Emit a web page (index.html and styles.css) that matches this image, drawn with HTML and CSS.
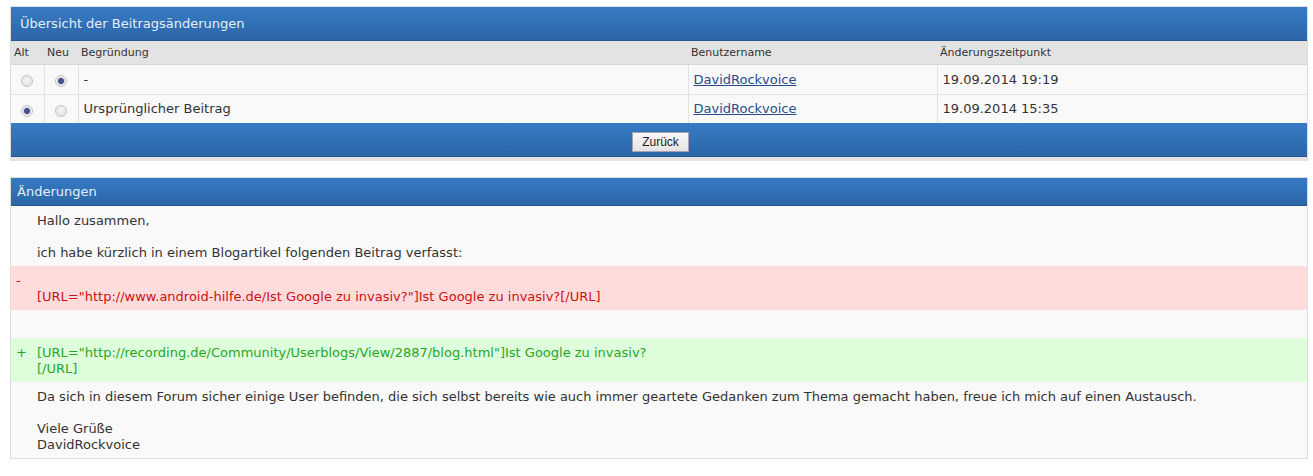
FILE: index.html
```html
<!DOCTYPE html>
<html lang="de">
<head>
    <meta charset="UTF-8">
    <title>Übersicht der Beitragsänderungen</title>
    <link rel="stylesheet" href="styles.css">
</head>
<body>
    <div class="box">
        <h2 class="box-title">Übersicht der Beitragsänderungen</h2>
        <table class="history">
            <thead>
                <tr>
                    <th class="col-alt">Alt</th>
                    <th class="col-neu">Neu</th>
                    <th class="col-reason">Begründung</th>
                    <th class="col-user">Benutzername</th>
                    <th>Änderungszeitpunkt</th>
                </tr>
            </thead>
            <tbody>
                <tr>
                    <td class="radio-cell"><input type="radio" name="old"></td>
                    <td class="radio-cell"><input type="radio" name="new" checked></td>
                    <td>-</td>
                    <td><a href="#">DavidRockvoice</a></td>
                    <td>19.09.2014 19:19</td>
                </tr>
                <tr>
                    <td class="radio-cell"><input type="radio" name="old" checked></td>
                    <td class="radio-cell"><input type="radio" name="new"></td>
                    <td>Ursprünglicher Beitrag</td>
                    <td><a href="#">DavidRockvoice</a></td>
                    <td>19.09.2014 15:35</td>
                </tr>
            </tbody>
        </table>
        <div class="box-footer">
            <button class="button" type="button">Zurück</button>
        </div>
    </div>

    <div class="box box-diff">
        <h2 class="box-title small">Änderungen</h2>
        <div class="diff">
            <div class="chunk"><span class="sign"></span><div class="text">Hallo zusammen,

ich habe kürzlich in einem Blogartikel folgenden Beitrag verfasst:</div></div>
            <div class="chunk removed"><span class="sign">-</span><div class="text">
[URL="http://www.android-hilfe.de/Ist Google zu invasiv?"]Ist Google zu invasiv?[/URL]</div></div>
            <div class="chunk"><span class="sign"></span><div class="text"> </div></div>
            <div class="chunk added"><span class="sign">+</span><div class="text">[URL="http://recording.de/Community/Userblogs/View/2887/blog.html"]Ist Google zu invasiv?
[/URL]</div></div>
            <div class="chunk"><span class="sign"></span><div class="text">Da sich in diesem Forum sicher einige User befinden, die sich selbst bereits wie auch immer geartete Gedanken zum Thema gemacht haben, freue ich mich auf einen Austausch.

Viele Grüße
DavidRockvoice</div></div>
        </div>
    </div>
</body>
</html>
```

FILE: styles.css
```css
:root {
    --blue-top: #367bc5;
    --blue-bottom: #2c66a6;
    --blue-line: #245690;
    --border-color: #dddddd;
    --row-bg: #f9f9f9;
    --head-bg: #e3e3e3;
    --text-color: #333333;
}

* {
    box-sizing: border-box;
}

body {
    margin: 6px 5px 0 10px;
    background: #ffffff;
    color: var(--text-color);
    font-family: "DejaVu Sans", Verdana, sans-serif;
    font-size: 13px;
}

.box {
    border: 1px solid var(--border-color);
    border-bottom: 4px solid var(--head-bg);
    background-color: var(--row-bg);
}

.box-title {
    margin: 0;
    height: 34px;
    padding: 0 9px;
    line-height: 33px;
    font-size: 13px;
    font-weight: normal;
    color: #e6eef7;
    background: linear-gradient(to bottom, var(--blue-top), var(--blue-bottom));
    border-bottom: 1px solid var(--blue-line);
}

.box-title.small {
    height: 28px;
    line-height: 27px;
    padding: 0 6px;
}

.history {
    width: 100%;
    border-collapse: collapse;
    table-layout: fixed;
}

.history th {
    height: 23px;
    padding: 0 3px;
    background-color: var(--head-bg);
    border-bottom: 1px solid #d2dbe0;
    font-size: 11px;
    font-weight: normal;
    text-align: left;
    color: var(--text-color);
}

.history .col-alt {
    width: 33px;
}

.history .col-neu {
    width: 34px;
}

.history .col-reason {
    width: 610px;
}

.history .col-user {
    width: 249px;
}

.history td {
    height: 30px;
    padding: 0 5px;
    background-color: var(--row-bg);
    border-bottom: 1px solid #e2e2e2;
    border-left: 1px solid #e2e2e2;
}

.history tr td:first-child {
    border-left: none;
}

.history tbody tr:last-child td {
    height: 29px;
    border-bottom: none;
}

.history td.radio-cell {
    padding: 0;
    text-align: center;
}

.history a {
    color: #284c8c;
}

input[type="radio"] {
    appearance: none;
    -webkit-appearance: none;
    width: 12px;
    height: 12px;
    margin: 2px 0 0;
    border: 1px solid #c4c4c4;
    border-radius: 50%;
    background: radial-gradient(circle at 50% 40%, #f6f6f6, #dcdcdc);
    vertical-align: middle;
}

input[type="radio"]:checked {
    background: radial-gradient(circle, #4c4f8e 0, #4c4f8e 2.5px, #cfcfe0 3.5px, #f4f4f4 4.5px, #dcdcdc 100%);
}

.box-footer {
    height: 34px;
    display: flex;
    align-items: center;
    justify-content: center;
    padding-top: 4px;
    background: linear-gradient(to bottom, var(--blue-top), var(--blue-bottom));
    border-bottom: 1px solid var(--blue-line);
}

.button {
    height: 20px;
    padding: 0 9px;
    margin-left: 3px;
    font-family: "Liberation Sans", Arial, sans-serif;
    font-size: 12px;
    color: #222;
    background: linear-gradient(to bottom, #f8f8f8, #e4e4e4);
    border: 1px solid #a99eb2;
    border-radius: 0;
    cursor: pointer;
}

.box-diff {
    margin-top: 16px;
    border-bottom: 1px solid var(--border-color);
}

.diff {
    line-height: 16px;
}

.chunk {
    display: flex;
    padding: 7px 0 5px;
}

.chunk .sign {
    width: 26px;
    flex: none;
    padding-left: 5px;
}

.chunk .text {
    white-space: pre-wrap;
}

.chunk.removed {
    background-color: #ffdcdc;
    color: #cc1111;
}

.chunk.added {
    background-color: #ddfddb;
    color: #2aa52a;
}
```
